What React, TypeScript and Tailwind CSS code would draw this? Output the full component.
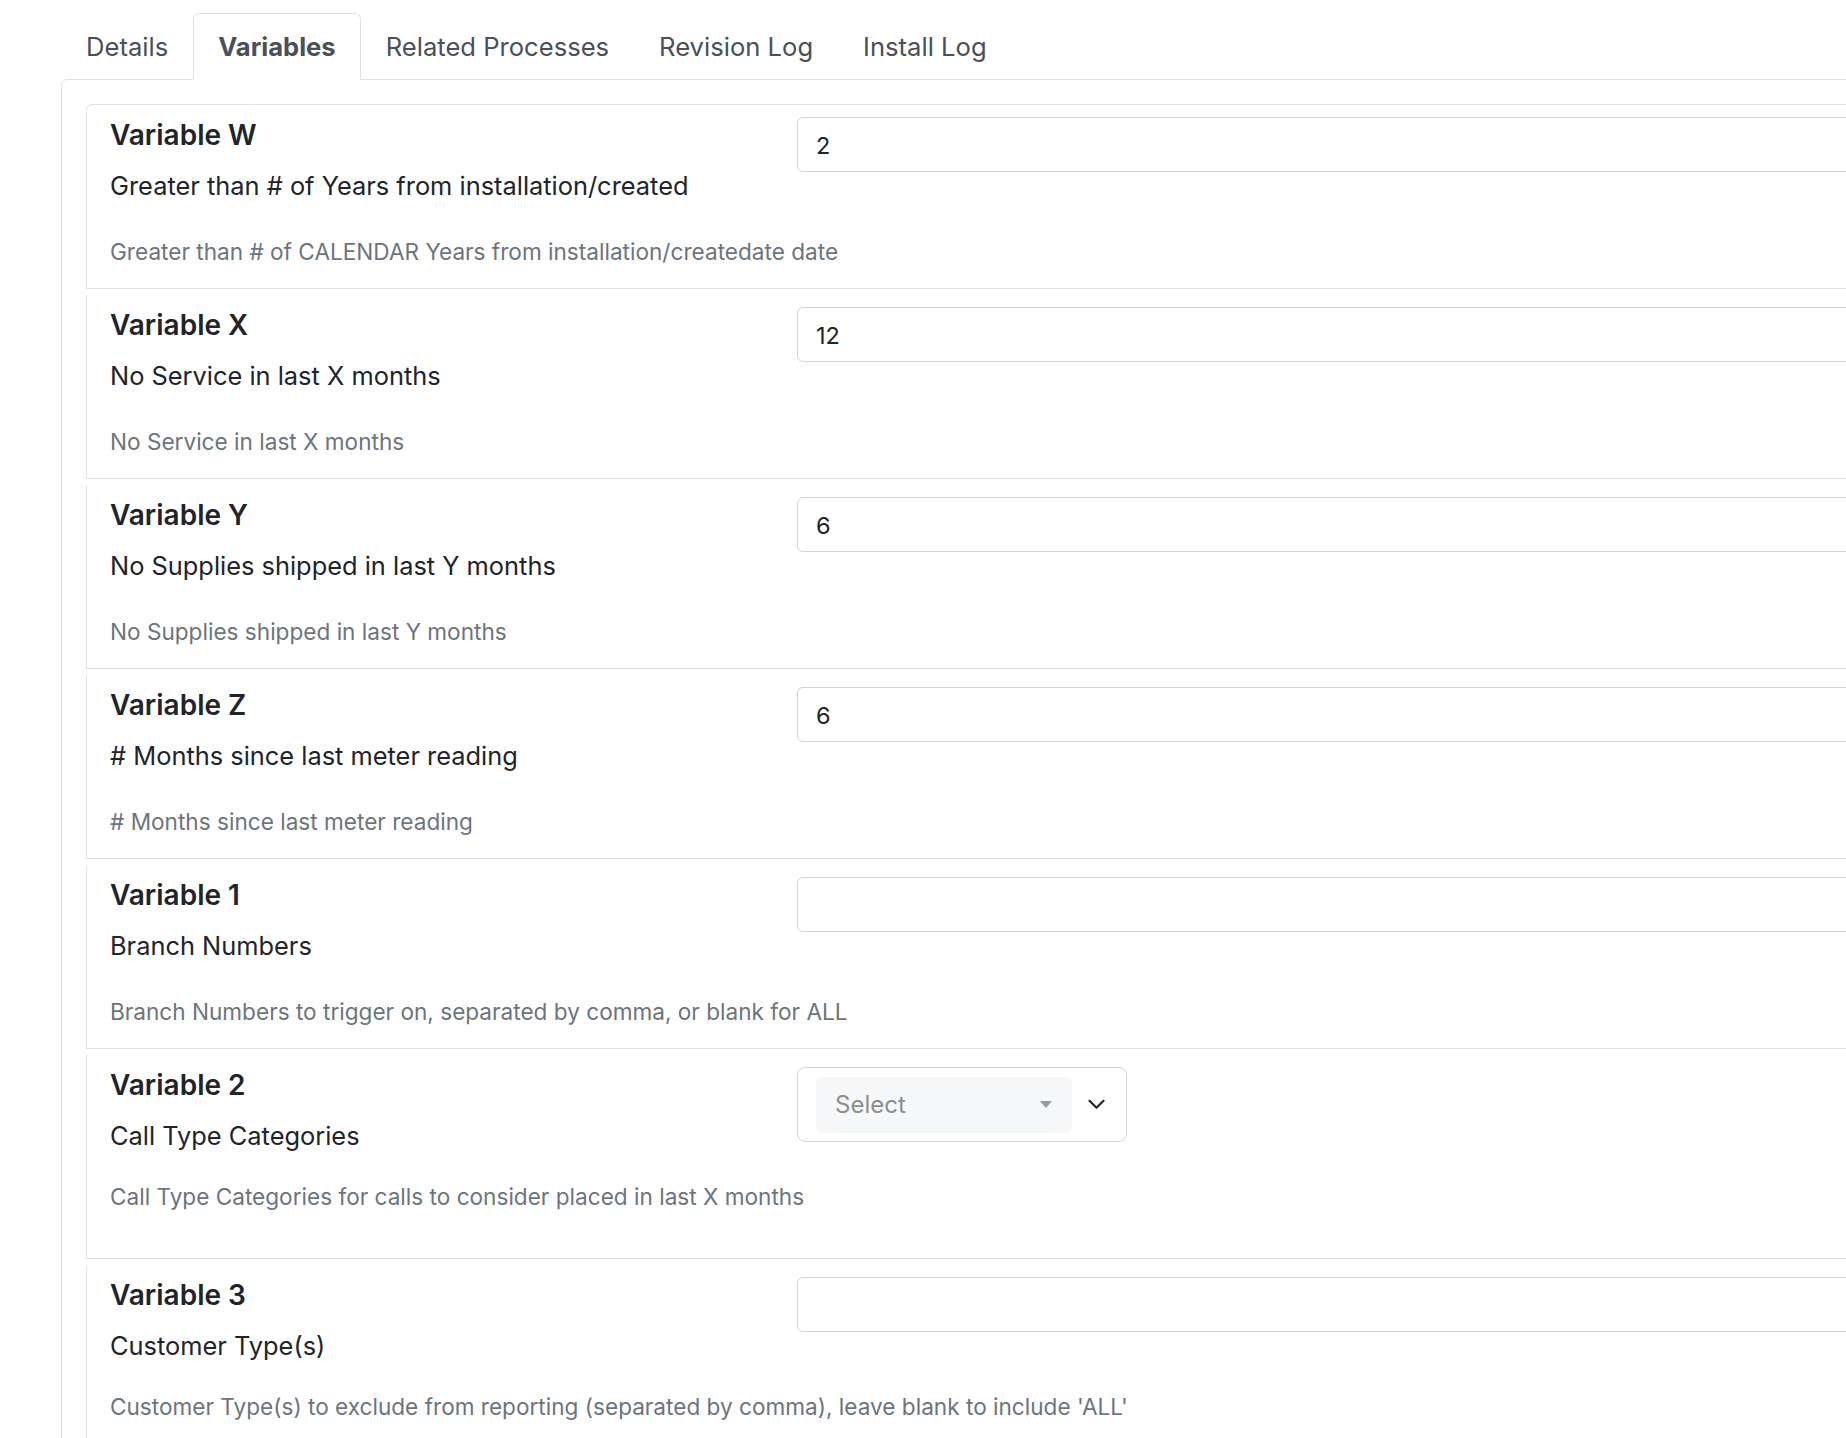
import React from "react"

type Variable = {
  name: string
  label: string
  help: string
  value?: string
  kind?: "input" | "select"
}

const variables: Variable[] = [
  {
    name: "Variable W",
    label: "Greater than # of Years from installation/created",
    help: "Greater than # of CALENDAR Years from installation/createdate date",
    value: "2",
  },
  { name: "Variable X", label: "No Service in last X months", help: "No Service in last X months", value: "12" },
  {
    name: "Variable Y",
    label: "No Supplies shipped in last Y months",
    help: "No Supplies shipped in last Y months",
    value: "6",
  },
  {
    name: "Variable Z",
    label: "# Months since last meter reading",
    help: "# Months since last meter reading",
    value: "6",
  },
  {
    name: "Variable 1",
    label: "Branch Numbers",
    help: "Branch Numbers to trigger on, separated by comma, or blank for ALL",
    value: "",
  },
  {
    name: "Variable 2",
    label: "Call Type Categories",
    help: "Call Type Categories for calls to consider placed in last X months",
    kind: "select",
  },
  {
    name: "Variable 3",
    label: "Customer Type(s)",
    help: "Customer Type(s) to exclude from reporting (separated by comma), leave blank to include 'ALL'",
    value: "",
  },
]

const tabs = ["Details", "Variables", "Related Processes", "Revision Log", "Install Log"]

function SelectBox() {
  return (
    <div className="flex h-[75px] w-[330px] items-center rounded-[8px] border border-[#ced4da] bg-white pl-[18px]">
      <div className="flex h-[56px] w-[256px] items-center justify-between rounded-[8px] bg-[#f6f7f9] pl-[19px] pr-[20px]">
        <span className="text-[24px] text-[#8e8e8e]">Select</span>
        <span className="h-0 w-0 border-x-[6.5px] border-t-[7px] border-x-transparent border-t-[#9a9a9a]" />
      </div>
      <svg className="ml-[16px]" width="17" height="11" viewBox="0 0 17 11" fill="none">
        <path d="M1.5 1.8l7 7 7-7" stroke="#212529" strokeWidth="2.2" strokeLinecap="round" strokeLinejoin="round" />
      </svg>
    </div>
  )
}

function VariableRow({ v, index }: { v: Variable; index: number }) {
  const first = index === 0
  const late = index >= 5
  return (
    <div
      className={
        "border-l border-r border-b border-[#dee2e6] px-[23px] pt-3 " +
        (first ? "border-t rounded-tl-[6px]" : "mt-[6px]") +
        (v.kind === "select" ? " pb-[44px]" : " pb-[19px]")
      }
    >
      <div className="grid grid-cols-[675px_1fr] gap-x-3">
        <div>
          <div className="text-[28px] font-semibold leading-[37px] text-[#212529]">{v.name}</div>
          <div className="mt-[13px] text-[25.4px] leading-[38px] text-[#212529]">{v.label}</div>
        </div>
        <div>
          {v.kind === "select" ? (
            <SelectBox />
          ) : (
            <div className="flex h-[55px] items-center rounded-[6px] border border-[#ced4da] px-[18px] pt-[2px] text-[23.5px] text-[#212529]">
              {v.value}
            </div>
          )}
        </div>
      </div>
      <div className={(late ? "mt-[25px]" : "mt-[30px]") + " text-[22.6px] leading-[34px] text-[#6c757d]"}>{v.help}</div>
    </div>
  )
}

export default function App() {
  return (
    <div
      className="relative h-[1438px] w-[1846px] overflow-hidden bg-white"
      style={{ fontFamily: "Inter, 'Noto Sans', 'Liberation Sans', sans-serif" }}
    >
      <div className="w-[2400px] pl-[61px] pt-[13px]">
        {/* tabs */}
        <div className="relative z-10 -mb-px flex">
          {tabs.map((t) => {
            const active = t === "Variables"
            return (
              <div
                key={t}
                className={
                  "rounded-t-[6px] border px-[24px] py-[13px] text-[25.6px] leading-[39px] text-[#495057] " +
                  (active ? "border-[#dee2e6] border-b-white bg-white font-bold" : "border-transparent")
                }
              >
                {t}
              </div>
            )
          })}
        </div>

        {/* tab panel */}
        <div className="rounded-tl-[6px] border border-[#dee2e6] p-[24px]">
          {variables.map((v, i) => (
            <VariableRow key={v.name} v={v} index={i} />
          ))}
        </div>
      </div>
    </div>
  )
}
